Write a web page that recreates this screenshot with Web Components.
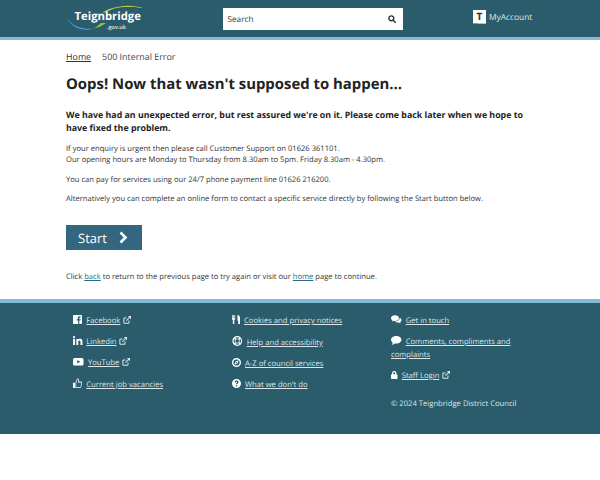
<!DOCTYPE html>
<html lang="en">
<head>
<meta charset="utf-8">
<title>500 Internal Error</title>
<style>
    html, body { margin: 0; padding: 0; background: #fff; }
    body { font-family: "Open Sans", sans-serif; color: #222; text-rendering: geometricPrecision; }
</style>
</head>
<body>
<site-header></site-header>
<error-page></error-page>
<site-footer></site-footer>

<script>
const ICONS = {
    facebook: {w: 9, h: 9, gap: 4.3, vb: '1 1 12 12', d: '<path d="M2 1h10a1 1 0 0 1 1 1v10a1 1 0 0 1-1 1H9.400V8.400h1.600l.3-1.900H9.400V5.300c0-.6.2-.9.9-.9h1V2.700c-.4 0-.9-.1-1.400-.1-1.500 0-2.500.9-2.500 2.500v1.400H6.100v1.900h1.800V13H2a1 1 0 0 1-1-1V2a1 1 0 0 1 1-1z"/>'},
    linkedin: {w: 9.500, h: 9, gap: 3.800, vb: '1 1.400 11.500 11.100', d: '<path d="M1 5h2.400v7.500H1zM2.200 1.400a1.400 1.400 0 1 1 0 2.800 1.400 1.400 0 0 1 0-2.800zM5 5h2.300v1c.4-.7 1.300-1.200 2.400-1.200 2.300 0 2.800 1.500 2.800 3.500v4.200h-2.400V8.800c0-.9 0-2-1.300-2s-1.400 1-1.400 2v3.700H5z"/>'},
    youtube: {w: 10.500, h: 7.500, gap: 4.500, vb: '.7 2.500 12.600 9', d: '<path fill-rule="evenodd" d="M2.500 2.500h9A1.800 1.800 0 0 1 13.300 4.300v5.400a1.800 1.800 0 0 1-1.800 1.800h-9A1.800 1.800 0 0 1 .7 9.700V4.300a1.800 1.800 0 0 1 1.800-1.800zM5.800 5v4L9.300 7z"/>'},
    thumb: {w: 9, h: 10, gap: 4.300, vb: '1 1 12 13', d: '<path fill-rule="evenodd" d="M1 7h2.500v7H1zM4.300 6.800 6.700 1c1.300 0 2 1 2 2.200v2.300h3c.9 0 1.500.8 1.300 1.700l-1 5.400c-.2.800-.7 1.400-1.400 1.400H4.300zm1 .3V13h5.300c.3 0 .4-.1.500-.4l1-5.300c0-.3-.1-.5-.4-.5h-4V3.200c0-.5-.2-.9-.6-1z"/>'},
    cutlery: {w: 8, h: 9.500, gap: 4, vb: '1 1 11 13', d: '<path d="M1 1h1v4.500h.7V1h.9v4.500h.7V1h1v5.500c0 .8-.6 1.300-1.200 1.500V14H2.200V8C1.500 7.800 1 7.300 1 6.500zM8.500 1c2 0 3.500 1.700 3.500 4.500V14H9.600V9H8.500z"/>'},
    lifering: {w: 10.500, h: 10, gap: 4.200, vb: '0 0 14 14', d: '<g fill="none" stroke="#fff"><circle cx="7" cy="7" r="6" stroke-width="1.700"/><circle cx="7" cy="7" r="3.100" stroke-width="1"/><path stroke-width="2" d="M2.600 2.600 5 5M11.400 2.600 9 5M2.600 11.400 5 9M11.400 11.400 9 9"/></g>'},
    compass: {w: 9, h: 9, gap: 4, vb: '.8 .8 12.400 12.400', d: '<path fill-rule="evenodd" d="M7 .8a6.200 6.200 0 1 1 0 12.400A6.200 6.200 0 0 1 7 .8zm0 1.900a4.300 4.300 0 1 0 0 8.600 4.300 4.300 0 0 0 0-8.600zM10 4 8.300 8.300 4 10l1.700-4.300zM7 6.200a.8.8 0 1 0 0 1.600.8.8 0 0 0 0-1.600z"/>'},
    question: {w: 9, h: 9, gap: 4, vb: '.8 .8 12.400 12.400', d: '<path fill-rule="evenodd" d="M7 .8a6.200 6.200 0 1 1 0 12.400A6.200 6.200 0 0 1 7 .8zM6 9.300v1.700h2V9.300zM7.100 3C5.600 3 4.700 3.800 4.500 5l1.700.5c.1-.6.400-.9.900-.9.400 0 .7.200.7.600 0 .9-1.800 1-1.800 3h1.900c0-1.100 1.900-1.300 1.900-3.200C9.800 3.800 8.700 3 7.100 3z"/>'},
    comments: {w: 10.500, h: 9, gap: 4.200, vb: '.7 1.500 12.600 10', d: '<path d="M5.500 1.500c2.700 0 4.800 1.500 4.800 3.400S8.200 8.300 5.500 8.300c-.5 0-1 0-1.400-.2-.8.6-1.800.9-2.800.9.600-.5 1-1.100 1.100-1.700C1.500 6.700.7 5.900.7 4.900c0-1.900 2.100-3.400 4.800-3.400z"/><path d="M11.200 4.300c1.300.5 2.100 1.500 2.100 2.700 0 1-.6 1.800-1.600 2.400.1.600.5 1.100 1 1.600-1 0-1.900-.3-2.600-.9-.4.100-.8.100-1.200.1-1.500 0-2.800-.5-3.500-1.300 3.100.1 5.800-1.900 5.800-4.600z"/>'},
    comment: {w: 10.500, h: 9, gap: 4.200, vb: '.8 1.500 12.400 10.700', d: '<path d="M7 1.500c3.400 0 6.200 2 6.200 4.500S10.400 10.500 7 10.500c-.6 0-1.200-.1-1.800-.2C4.100 11.300 2.700 12 1.300 12.200c.8-.8 1.400-1.800 1.500-2.800C1.600 8.500.8 7.300.8 6 .8 3.500 3.600 1.500 7 1.500z"/>'},
    lock: {w: 6.500, h: 8, gap: 4.200, vb: '2 1 10 12', d: '<path fill-rule="evenodd" d="M7 1c2 0 3.300 1.400 3.300 3.400V6h.7c.6 0 1 .4 1 1v5c0 .6-.4 1-1 1H3c-.6 0-1-.4-1-1V7c0-.6.4-1 1-1h.7V4.400C3.700 2.400 5 1 7 1zm0 1.900c-.9 0-1.400.6-1.400 1.500V6h2.800V4.400c0-.9-.5-1.500-1.400-1.500z"/>'}
};

const externalIcon = `<svg class="ext" viewBox="0 0 14 14" width="8" height="8" fill="none" stroke="currentColor" stroke-width="1.800"><path d="M10.500 8v3.200a1.300 1.300 0 0 1-1.300 1.300H2.800a1.300 1.300 0 0 1-1.300-1.300V4.800a1.300 1.300 0 0 1 1.300-1.300H6"/><path d="M6 8 12.500 1.500" /><path fill="currentColor" stroke="none" d="M8.500 0H14v5.500z"/></svg>`;

const headerTemplate = document.createElement('template');
headerTemplate.innerHTML = `
    <style>
        :host { display: block; background: #2b5c6b; border-bottom: 3px solid #84bad4; height: 37px; }
        .inner { display: grid; grid-template-columns: 157px 180px 1fr; height: 37px; padding-left: 66px; box-sizing: border-box; }
        .logo { position: relative; font-weight: 700; color: #fff; }
        .logo svg { position: absolute; left: 0; top: 0; }
        .name { position: absolute; left: 8.500px; top: 10px; font-size: 11.300px; line-height: 13px; }
        .gov { position: absolute; left: 41px; top: 24.500px; font-size: 5.500px; line-height: 5px; font-weight: 600; color: #e2ebee; }
        .search { align-self: start; margin-top: 8px; height: 22px; background: #fff; display: flex; align-items: center; justify-content: space-between; padding: 0 7px 0 4.500px; box-sizing: border-box; font-size: 8.200px; color: #333; }
        .search svg { display: block; }
        .account { display: flex; align-items: flex-start; margin: 10px 0 0 70px; font-size: 8.400px; line-height: 14px; color: #dbe7ea; }
        .t { width: 13px; height: 13.500px; background: #fff; color: #333; font-size: 10px; font-weight: 700; line-height: 13px; text-align: center; margin-right: 3px; border-bottom: 1px solid; border-image: linear-gradient(90deg, #5aa5d6 40%, #c6cf4a 40%) 1; box-sizing: border-box; }
        .label { padding-top: 1px; }
    </style>
    <div class="inner">
        <div class="logo">
            <svg width="80" height="34" viewBox="0 0 80 34">
                <path d="M36 13C42 8 56 3.500 77 8C58 5 47 8 41 12z" fill="#a8c63e"/>
                <path d="M55 6.200C62 5 70 6 77 8C69 6.800 62 6.200 56 7z" fill="#d8d24a"/>
                <path d="M1 18C6 26 16 30 27 28.500C18 32 6 28 1 18z" fill="#5aa5d6"/>
                <path d="M27 28.500C32 28 36 26 40 23L35 23C32 26 30 27.500 27 28.500z" fill="#9bc13c"/>
            </svg>
            <span class="name">Teignbridge</span>
            <span class="gov">.gov.uk</span>
        </div>
        <div class="search">
            <span>Search</span>
            <svg width="8" height="8" viewBox="0 0 14 14" fill="none" stroke="#333" stroke-width="2.400"><circle cx="5.800" cy="5.800" r="4.300"/><path d="M9 9l4 4" stroke-linecap="round"/></svg>
        </div>
        <div class="account"><span class="t">T</span><span class="label">MyAccount</span></div>
    </div>
`;

class SiteHeader extends HTMLElement {
    constructor() {
        super();
        this.attachShadow({mode: 'open'});
        this.shadowRoot.appendChild(headerTemplate.content.cloneNode(true));
    }
}

const pageTemplate = document.createElement('template');
pageTemplate.innerHTML = `
    <style>
        :host { display: block; height: 259px; padding: 0 66px; color: #222; overflow: hidden; }
        .crumbs { display: flex; gap: 11px; padding-top: 10px; font-size: 8.900px; line-height: 14px; color: #444; }
        .crumbs a { color: #333; text-decoration: underline; }
        h1 { margin: 9px 0 0; font-size: 14.900px; line-height: 22px; font-weight: 700; color: #222; }
        h2 { margin: 13.500px 0 0; font-size: 8.800px; line-height: 13px; font-weight: 700; color: #222; }
        p { margin: 0; font-size: 7.600px; line-height: 11px; color: #333; }
        .enq { margin-top: 9px; }
        .pay { margin-top: 9px; }
        .alt { margin-top: 8px; }
        a { color: #2b6a80; }
        .start { display: flex; align-items: center; margin-top: 20.500px; width: 76px; height: 25px; background: #33677f; color: #fff; font-size: 13px; padding-left: 12px; box-sizing: border-box; }
        .start svg { margin-left: 12px; }
        .click { margin-top: 21.500px; }
    </style>
    <nav class="crumbs"><a href="#">Home</a><span>500 Internal Error</span></nav>
    <h1>Oops! Now that wasn't supposed to happen...</h1>
    <h2>We have had an unexpected error, but rest assured we're on it. Please come back later when we hope to have fixed the problem.</h2>
    <p class="enq">If your enquiry is urgent then please call Customer Support on 01626 361101.<br>Our opening hours are Monday to Thursday from 8.30am to 5pm. Friday 8.30am - 4.30pm.</p>
    <p class="pay">You can pay for services using our 24/7 phone payment line 01626 216200.</p>
    <p class="alt">Alternatively you can complete an online form to contact a specific service directly by following the Start button below.</p>
    <div class="start">Start<svg width="9" height="13" viewBox="0 0 9 13" fill="none" stroke="#fff" stroke-width="2.600"><path d="M1.500 1.500 6.500 6.500 1.500 11.500"/></svg></div>
    <p class="click">Click <a href="#">back</a> to return to the previous page to try again or visit our <a href="#">home</a> page to continue.</p>
`;

class ErrorPage extends HTMLElement {
    constructor() {
        super();
        this.attachShadow({mode: 'open'});
        this.shadowRoot.appendChild(pageTemplate.content.cloneNode(true));
    }
}

const linkTemplate = document.createElement('template');
linkTemplate.innerHTML = `
    <style>
        :host { display: block; font-size: 7.650px; line-height: 13px; color: #dbe7ea; margin-bottom: 8px; }
        svg.icon { vertical-align: -1px; fill: #fff; }
        a { color: inherit; text-decoration: underline; }
        svg.ext { vertical-align: -1px; margin-left: 2.500px; }
    </style>
    <span id="box"></span>
`;

class FooterLink extends HTMLElement {
    constructor() {
        super();
        this.attachShadow({mode: 'open'});
        this.shadowRoot.appendChild(linkTemplate.content.cloneNode(true));
        const icon = ICONS[this.getAttribute('icon')];
        const ext = this.hasAttribute('external') ? externalIcon : '';
        this.shadowRoot.querySelector('#box').innerHTML =
            `<svg class="icon" viewBox="${icon.vb}" width="${icon.w}" height="${icon.h}" style="margin-right:${icon.gap}px">${icon.d}</svg><a href="#"><slot></slot></a>${ext}`;
    }
}

const footerTemplate = document.createElement('template');
footerTemplate.innerHTML = `
    <style>
        :host { display: block; background: #2b5c6b; border-top: 4px solid #84bad4; height: 131px; }
        .cols { display: grid; grid-template-columns: repeat(3, 159px); padding: 11.500px 0 0 73px; }
        ::slotted(p) { margin: 15px 0 0; font-size: 7.650px; line-height: 13px; color: #dbe7ea; }
    </style>
    <div class="cols">
        <div><slot name="one"></slot></div>
        <div><slot name="two"></slot></div>
        <div><slot name="three"></slot></div>
    </div>
`;

class SiteFooter extends HTMLElement {
    constructor() {
        super();
        this.attachShadow({mode: 'open'});
        this.shadowRoot.appendChild(footerTemplate.content.cloneNode(true));
        this.innerHTML = `
            <footer-link slot="one" icon="facebook" external>Facebook</footer-link>
            <footer-link slot="one" icon="linkedin" external>Linkedin</footer-link>
            <footer-link slot="one" icon="youtube" external>YouTube</footer-link>
            <footer-link slot="one" icon="thumb">Current job vacancies</footer-link>
            <footer-link slot="two" icon="cutlery">Cookies and privacy notices</footer-link>
            <footer-link slot="two" icon="lifering">Help and accessibility</footer-link>
            <footer-link slot="two" icon="compass">A-Z of council services</footer-link>
            <footer-link slot="two" icon="question">What we don't do</footer-link>
            <footer-link slot="three" icon="comments">Get in touch</footer-link>
            <footer-link slot="three" icon="comment">Comments, compliments and complaints</footer-link>
            <footer-link slot="three" icon="lock" external>Staff Login</footer-link>
            <p slot="three">© 2024 Teignbridge District Council</p>
        `;
    }
}

window.customElements.define('site-header', SiteHeader);
window.customElements.define('error-page', ErrorPage);
window.customElements.define('footer-link', FooterLink);
window.customElements.define('site-footer', SiteFooter);
</script>
</body>
</html>
